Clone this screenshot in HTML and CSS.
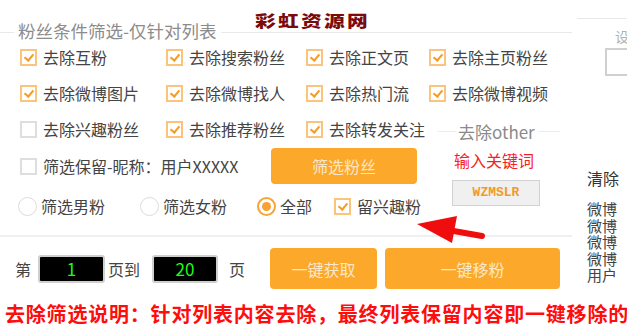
FILE: index.html
```html
<!DOCTYPE html>
<html lang="zh-CN">
  <head>
    <meta charset="UTF-8" />
    <title>粉丝条件筛选</title>
    <link rel="stylesheet" href="styles.css">
  </head>
  <body>
    <div class="page">
      <div class="top">
        <div class="main">
          <div class="head">
            <span class="legend">粉丝条件筛选-仅针对列表</span>
            <span class="logo">彩虹资源网</span>
          </div>

          <div class="opts">
            <label class="ck on"><i class="box"></i>去除互粉</label>
            <label class="ck on"><i class="box"></i>去除搜索粉丝</label>
            <label class="ck on"><i class="box"></i>去除正文页</label>
            <label class="ck on"><i class="box"></i>去除主页粉丝</label>
            <label class="ck on"><i class="box"></i>去除微博图片</label>
            <label class="ck on"><i class="box"></i>去除微博找人</label>
            <label class="ck on"><i class="box"></i>去除热门流</label>
            <label class="ck on"><i class="box"></i>去除微博视频</label>
          </div>

          <div class="lower">
            <div class="left">
              <div class="opts">
                <label class="ck"><i class="box"></i>去除兴趣粉丝</label>
                <label class="ck on"><i class="box"></i>去除推荐粉丝</label>
                <label class="ck on"><i class="box"></i>去除转发关注</label>
              </div>
              <div class="keep-row">
                <label class="ck keep"><i class="box"></i>筛选保留-昵称：用户XXXXX</label>
                <button class="btn btn-filter">筛选粉丝</button>
              </div>
              <div class="gender-row">
                <label class="rd male"><i class="dot"></i>筛选男粉</label>
                <label class="rd female"><i class="dot"></i>筛选女粉</label>
                <label class="rd all on"><i class="dot"></i>全部</label>
                <label class="ck on"><i class="box"></i>留兴趣粉</label>
              </div>
            </div>

            <div class="other">
              <div class="other-head"><span>去除other</span></div>
              <div class="kw-label">输入关键词</div>
              <div class="kw-box">WZMSLR</div>
            </div>
          </div>

          <div class="pages">
            <span class="word">第</span>
            <span class="num num-from">1</span>
            <span class="word word-to">页到</span>
            <span class="num num-to">20</span>
            <span class="word word-end">页</span>
            <button class="btn btn-get">一键获取</button>
            <button class="btn btn-move">一键移粉</button>
          </div>
        </div>

        <div class="side">
          <div class="side-head"><span>设</span></div>
          <div class="side-input"></div>
          <div class="side-clear">清除</div>
          <div class="side-list">
            <div>微博</div>
            <div>微博</div>
            <div>微博</div>
            <div>微博</div>
            <div>用户</div>
          </div>
        </div>
      </div>

      <p class="note">去除筛选说明：针对列表内容去除，最终列表保留内容即一键移除的</p>

      <!-- red pointer drawn over the form -->
      <svg class="arrow" width="627" height="326" viewBox="0 0 627 326">
        <polygon points="417,224 457,216 452,243" fill="#f00d0d" />
        <line x1="448" y1="230" x2="482" y2="236" stroke="#f00d0d" stroke-width="6" stroke-linecap="round" />
      </svg>
    </div>
  </body>
</html>
```

FILE: styles.css
```css
body {
  margin: 0;
  background: #fff;
  font-family: "Noto Sans CJK SC", "Noto Sans", sans-serif;
  font-size: 16px;
  color: #444;
}

.page {
  position: relative;
  width: 627px;
  height: 326px;
  overflow: hidden;
}

.top {
  display: flex;
}

.main {
  width: 572px;
  flex: none;
}

/* group box header */
.head {
  height: 39px;
  display: flex;
  align-items: flex-start;
  background: linear-gradient(#e8e8e8, #e8e8e8) 0 32px / 100% 1px no-repeat;
}

.legend {
  margin: 21px 0 0 14px;
  padding: 0 4px;
  background: #fff;
  line-height: 20px;
  font-size: 17.5px;
  color: #8c8c8c;
}

.logo {
  margin: 10px 0 0 34px;
  line-height: 20px;
  font-size: 18px;
  font-weight: 900;
  letter-spacing: 2px;
  color: #7d0a0a;
  transform: scale(1.15, 0.88);
  transform-origin: left center;
}

/* checkbox rows */
.opts {
  display: grid;
  grid-template-columns: 146px 140px 123px auto;
  grid-auto-rows: 36px;
  padding-left: 20px;
}

.ck,
.rd {
  display: flex;
  align-items: center;
  white-space: nowrap;
  line-height: 20px;
}

.box {
  width: 13px;
  height: 13px;
  border: 2px solid #dedede;
  margin-right: 6px;
  position: relative;
  flex: none;
}

.ck.on .box {
  border-color: #fcc37c;
}

.ck.on .box::after {
  content: "";
  position: absolute;
  left: 4px;
  top: 1px;
  width: 4px;
  height: 7px;
  border: solid #f59c25;
  border-width: 0 2px 2px 0;
  transform: rotate(40deg);
}

.lower {
  display: flex;
}

.left {
  width: 438px;
}

.keep-row {
  height: 38px;
  display: flex;
  align-items: center;
  padding-left: 20px;
}

.keep {
  width: 251px;
}

.btn {
  border: none;
  border-radius: 4px;
  background: #fba82b;
  color: #fde7c9;
  font-family: inherit;
  font-size: 16px;
  padding: 0;
}

.btn-filter {
  width: 146px;
  height: 36px;
}

.gender-row {
  height: 42px;
  display: flex;
  align-items: center;
  padding-left: 18px;
}

.rd.male {
  width: 122px;
}

.rd.female {
  width: 117px;
}

.rd.all {
  width: 77px;
}

.dot {
  width: 17px;
  height: 17px;
  border: 1px solid #dcdcdc;
  border-radius: 50%;
  margin-right: 4px;
  box-sizing: content-box;
  position: relative;
  flex: none;
}

.rd.on .dot {
  width: 15px;
  height: 15px;
  border: 2px solid #f8a43a;
}

.rd.on .dot::after {
  content: "";
  position: absolute;
  left: 3px;
  top: 3px;
  width: 9px;
  height: 9px;
  border-radius: 50%;
  background: #f7a033;
}

/* keyword group */
.other {
  width: 122px;
}

.other-head {
  height: 40px;
  display: flex;
  align-items: center;
  background: linear-gradient(#ececec, #ececec) 0 20px / 100% 1px no-repeat;
}

.other-head span {
  margin-left: 18px;
  padding: 0 3px 0 2px;
  background: #fff;
  font-size: 17px;
  color: #8a8a8a;
}

.kw-label {
  padding-left: 16px;
  line-height: 18px;
  color: #f52222;
}

.kw-box {
  width: 86px;
  height: 24px;
  margin: 11px 0 0 14px;
  border: 1px solid #d2d2d2;
  background: #f0f0f0;
  color: #f39a26;
  font-family: "Liberation Mono", monospace;
  font-size: 13px;
  font-weight: bold;
  line-height: 24px;
  text-align: center;
}

/* page range and actions */
.pages {
  margin-top: 8px;
  padding-top: 11px;
  border-top: 2px solid #efefef;
  height: 41px;
  display: flex;
  align-items: center;
}

.word {
  margin-left: 15px;
  line-height: 20px;
}

.num {
  height: 24px;
  border: 2px solid #cfcfcf;
  border-radius: 3px;
  background: #000;
  color: #19ff19;
  font-size: 17px;
  line-height: 24px;
  text-align: center;
}

.num-from {
  width: 63px;
  margin: 0 3px 0 7px;
}

.pages .word-to {
  margin-left: 0;
}

.num-to {
  width: 62px;
  margin-left: 12px;
}

.pages .word-end {
  margin-left: 11px;
}

.btn-get {
  width: 107px;
  height: 41px;
  margin-left: 25px;
}

.btn-move {
  width: 175px;
  height: 41px;
  margin-left: 8px;
}

/* clipped right panel */
.side {
  flex: 1;
  margin-left: 5px;
  overflow: hidden;
  white-space: nowrap;
}

.side-head {
  margin-top: 18px;
  border-top: 1px solid #e8e8e8;
  padding: 9px 0 0 38px;
  height: 20px;
  font-size: 14px;
  color: #b0b0b0;
  line-height: 16px;
}

.side-input {
  width: 40px;
  height: 24px;
  margin: 0 0 0 28px;
  border: 2px solid #d2cfd2;
}

.side-clear {
  margin: 93px 0 0 10px;
  line-height: 18px;
  color: #333;
}

.side-list {
  margin: 14px 0 0 10px;
  font-size: 15px;
  line-height: 16.6px;
  color: #444;
}

.note {
  margin: 12px 0 0 5px;
  line-height: 26px;
  font-size: 20px;
  font-weight: bold;
  letter-spacing: 0.8px;
  color: #ff0c0c;
  white-space: nowrap;
}

.arrow {
  position: absolute;
  left: 0;
  top: 0;
  pointer-events: none;
}
```
